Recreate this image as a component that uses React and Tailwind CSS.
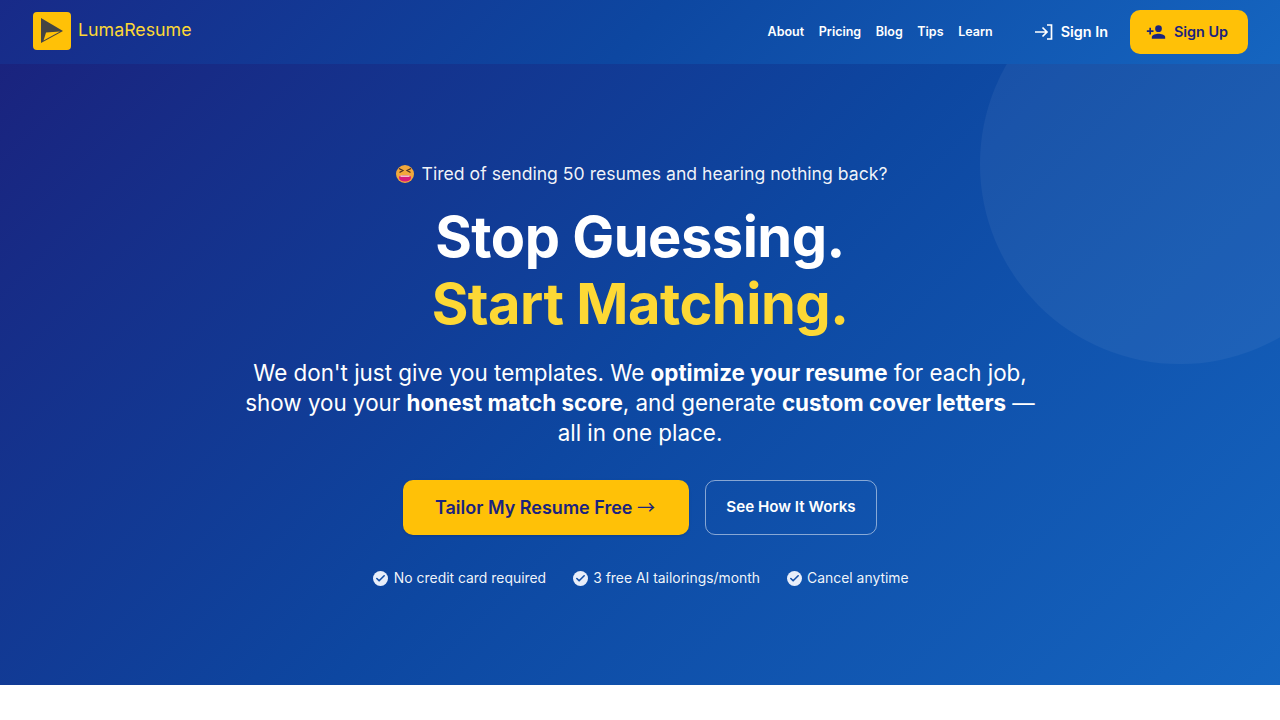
import { Check } from "lucide-react";

function Logo() {
  return (
    <div className="flex h-[38px] w-[38px] items-center justify-center rounded-[4px] bg-[#ffc107]">
      <svg width="38" height="38" viewBox="0 0 38 38">
        <path d="M8 6 L30 19 L8 31 Z" fill="#444444" />
        <path d="M10.500 28.500 L27 19.500 L13 20.500 Z" fill="#ffc107" />
      </svg>
    </div>
  );
}

function SignInIcon() {
  return (
    <svg width="20" height="20" viewBox="0 0 20 20" fill="none" stroke="white" strokeWidth="1.700">
      <path d="M2 10h12M9.500 5.500l4.500 4.500-4.500 4.500" />
      <path d="M14 3h4.500v14H14" />
    </svg>
  );
}

function AddUserIcon() {
  return (
    <svg width="20" height="20" viewBox="0 0 24 24" fill="#1a237e">
      <circle cx="15" cy="8" r="4" />
      <path d="M7 20v-2c0-2.700 5.300-4 8-4s8 1.300 8 4v2z" />
      <path d="M6 10V7H4v3H1v2h3v3h2v-3h3v-2z" />
    </svg>
  );
}

function TiredFace() {
  return (
    <svg width="18" height="18" viewBox="0 0 18 18">
      <circle cx="9" cy="9" r="9" fill="#f2a83c" />
      <path d="M3 3.500l3.800 2L3.500 7.500M15 3.500l-3.800 2L14.500 7.500" fill="none" stroke="#4a2f24" strokeWidth="1.400" />
      <path d="M3 12C3 9.500 15 9.500 15 12C15 15.500 12 16.500 9 16.500C6 16.500 3 15.500 3 12Z" fill="#d81b7a" />
      <path d="M4.500 10.500h9v1.300h-9z" fill="#f5e6e0" />
    </svg>
  );
}

function Perk({ children }) {
  return (
    <div className="flex items-center gap-[5.5px]">
      <span className="flex h-[15px] w-[15px] items-center justify-center rounded-full bg-[#e8eefa]">
        <Check size={11} strokeWidth={3.5} color="#1450a8" />
      </span>
      <span>{children}</span>
    </div>
  );
}

export default function App() {
  return (
    <div className="min-h-[720px] bg-white font-['Inter',sans-serif]">
      <header className="relative flex h-[64px] items-center justify-between bg-[linear-gradient(135deg,#182a88_0%,#0d47a1_50%,#1565c0_100%)] pl-[33px] pr-[32px]">
        <div className="mb-[3px] flex items-center gap-[7px]">
          <Logo />
          <span className="text-[17.8px] font-normal text-[#fdd835]">LumaResume</span>
        </div>
        <div className="flex items-center">
          <nav className="flex items-center gap-[14.6px] text-[12.5px] font-semibold text-white">
            <span>About</span>
            <span>Pricing</span>
            <span>Blog</span>
            <span>Tips</span>
            <span>Learn</span>
          </nav>
          <div className="ml-[40px] flex items-center gap-[8px] text-[14.4px] font-semibold text-white">
            <SignInIcon />
            <span>Sign In</span>
          </div>
          <div className="ml-[22px] flex h-[44px] w-[118px] items-center justify-center gap-[8px] rounded-[10px] bg-[#ffc107] pr-[4px] text-[14.4px] font-semibold text-[#1a237e]">
            <AddUserIcon />
            <span>Sign Up</span>
          </div>
        </div>
      </header>
      <div className="relative h-[621px] overflow-hidden bg-[linear-gradient(135deg,#1a237e_0%,#0d47a1_50%,#1565c0_100%)]">
        <div className="absolute right-[-100px] top-[-100px] h-[400px] w-[400px] rounded-full bg-white/5" />
        <main className="relative flex flex-col items-center pt-[96px] text-center text-white">
          <p className="flex items-center gap-[8px] pl-[3px] text-[17.64px] leading-[27px] text-white/95">
            <TiredFace />
            <span>Tired of sending 50 resumes and hearing nothing back?</span>
          </p>
          <h1 className="mt-[17px] text-[56px] font-bold leading-[67px] tracking-[-0.5px]">
            Stop Guessing.
            <br />
            <span className="text-[#fdd835]">Start Matching.</span>
          </h1>
          <p className="mt-[20px] w-[800px] text-[22.4px] leading-[30px] text-white">
            We don't just give you templates. We <strong>optimize your resume</strong> for each job, show you your{" "}
            <strong>honest match score</strong>, and generate <strong>custom cover letters</strong> — all in one place.
          </p>
          <div className="mt-[32px] flex items-center gap-[16px]">
            <div className="flex h-[55px] w-[286px] items-center justify-center rounded-[10px] bg-[#ffc107] pb-[2px] pr-[2px] text-[18px] font-semibold leading-none text-[#1a237e] shadow-sm">
              <span>
                Tailor My Resume Free <span className="font-['Noto_Sans_CJK_SC',sans-serif] font-normal leading-none">→</span>
              </span>
            </div>
            <div className="flex h-[55px] w-[172px] items-center justify-center rounded-[10px] border border-white/50 text-[15.2px] font-semibold text-white">
              See How It Works
            </div>
          </div>
          <div className="mt-[33px] flex items-center gap-[26.5px] pl-[2px] text-[13.92px] text-white/95">
            <Perk>No credit card required</Perk>
            <Perk>3 free AI tailorings/month</Perk>
            <Perk>Cancel anytime</Perk>
          </div>
        </main>
      </div>
    </div>
  );
}
